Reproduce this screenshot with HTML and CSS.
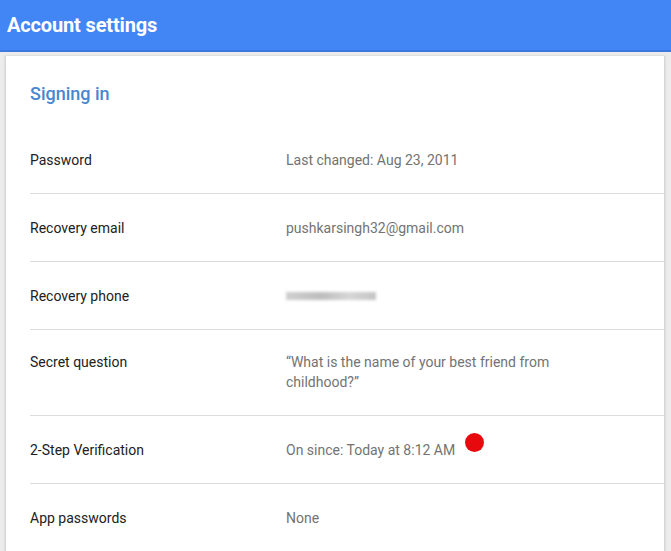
FILE: index.html
```html
<!DOCTYPE html>
<html>
<head>
<meta charset="utf-8">
<link rel="stylesheet" href="styles.css">
</head>
<body>
<header class="topbar"><h1 class="title">Account settings</h1></header>
<main class="wrap">
  <section class="card">
    <h2 class="section-title">Signing in</h2>
    <div class="row">
      <div class="label">Password</div>
      <div class="value">Last changed: Aug 23, 2011</div>
    </div>
    <div class="row">
      <div class="label">Recovery email</div>
      <div class="value">pushkarsingh32@gmail.com</div>
    </div>
    <div class="row">
      <div class="label">Recovery phone</div>
      <div class="value"><span class="redacted"></span></div>
    </div>
    <div class="row row-multi">
      <div class="label">Secret question</div>
      <div class="value value-block">“What is the name of your best friend from<br>childhood?”</div>
    </div>
    <div class="row">
      <div class="label">2-Step Verification</div>
      <div class="value">On since: Today at 8:12 AM<span class="dot"></span></div>
    </div>
    <div class="row">
      <div class="label">App passwords</div>
      <div class="value">None</div>
    </div>
  </section>
</main>
</body>
</html>
```
FILE: styles.css
```css
html, body {
  margin: 0;
  padding: 0;
  background: #ececec;
  font-family: Roboto, "Liberation Sans", Arial, sans-serif;
  overflow: hidden;
}
.topbar {
  height: 50px;
  background: #4285f4;
  border-bottom: 2px solid #3b78e0;
  display: flex;
  align-items: center;
  padding-left: 7px;
}
.title {
  margin: 0;
  color: #fff;
  font-size: 20px;
  font-weight: 700;
  letter-spacing: -0.15px;
}
.wrap {
  padding: 4px 6px 0 5px;
}
.card {
  background: #fff;
  border-left: 1px solid #d6d6d6;
  border-right: 1px solid #d6d6d6;
  box-shadow: 0 0 2px rgba(0,0,0,0.15);
  padding: 0 0 40px 24px;
  min-height: 600px;
}
.section-title {
  margin: 0;
  padding-top: 25px;
  height: 45px;
  color: #4a86cf;
  font-size: 18px;
  font-weight: 500;
  line-height: 26px;
  box-sizing: content-box;
}
.row {
  display: flex;
  align-items: flex-start;
  border-bottom: 1px solid #dcdcdc;
  padding: 24px 0 23px;
  font-size: 14px;
  line-height: 20px;
}
.row-multi { padding-top: 22px; }
.row:last-child { border-bottom: none; }
.label {
  width: 256px;
  flex: none;
  color: #212121;
}
.value {
  color: #737373;
  display: flex;
  align-items: flex-start;
}
.value-block { display: block; }
.redacted {
  display: inline-block;
  width: 90px;
  height: 8px;
  margin-top: 6px;
  background: linear-gradient(90deg, #cfcfcf, #bdbdbd 40%, #d6d6d6 70%, #c4c4c4);
  filter: blur(1.5px);
}
.dot {
  display: inline-block;
  width: 19px;
  height: 19px;
  border-radius: 50%;
  background: #e8090f;
  margin-left: 10px;
  margin-top: -7px;
}
```
